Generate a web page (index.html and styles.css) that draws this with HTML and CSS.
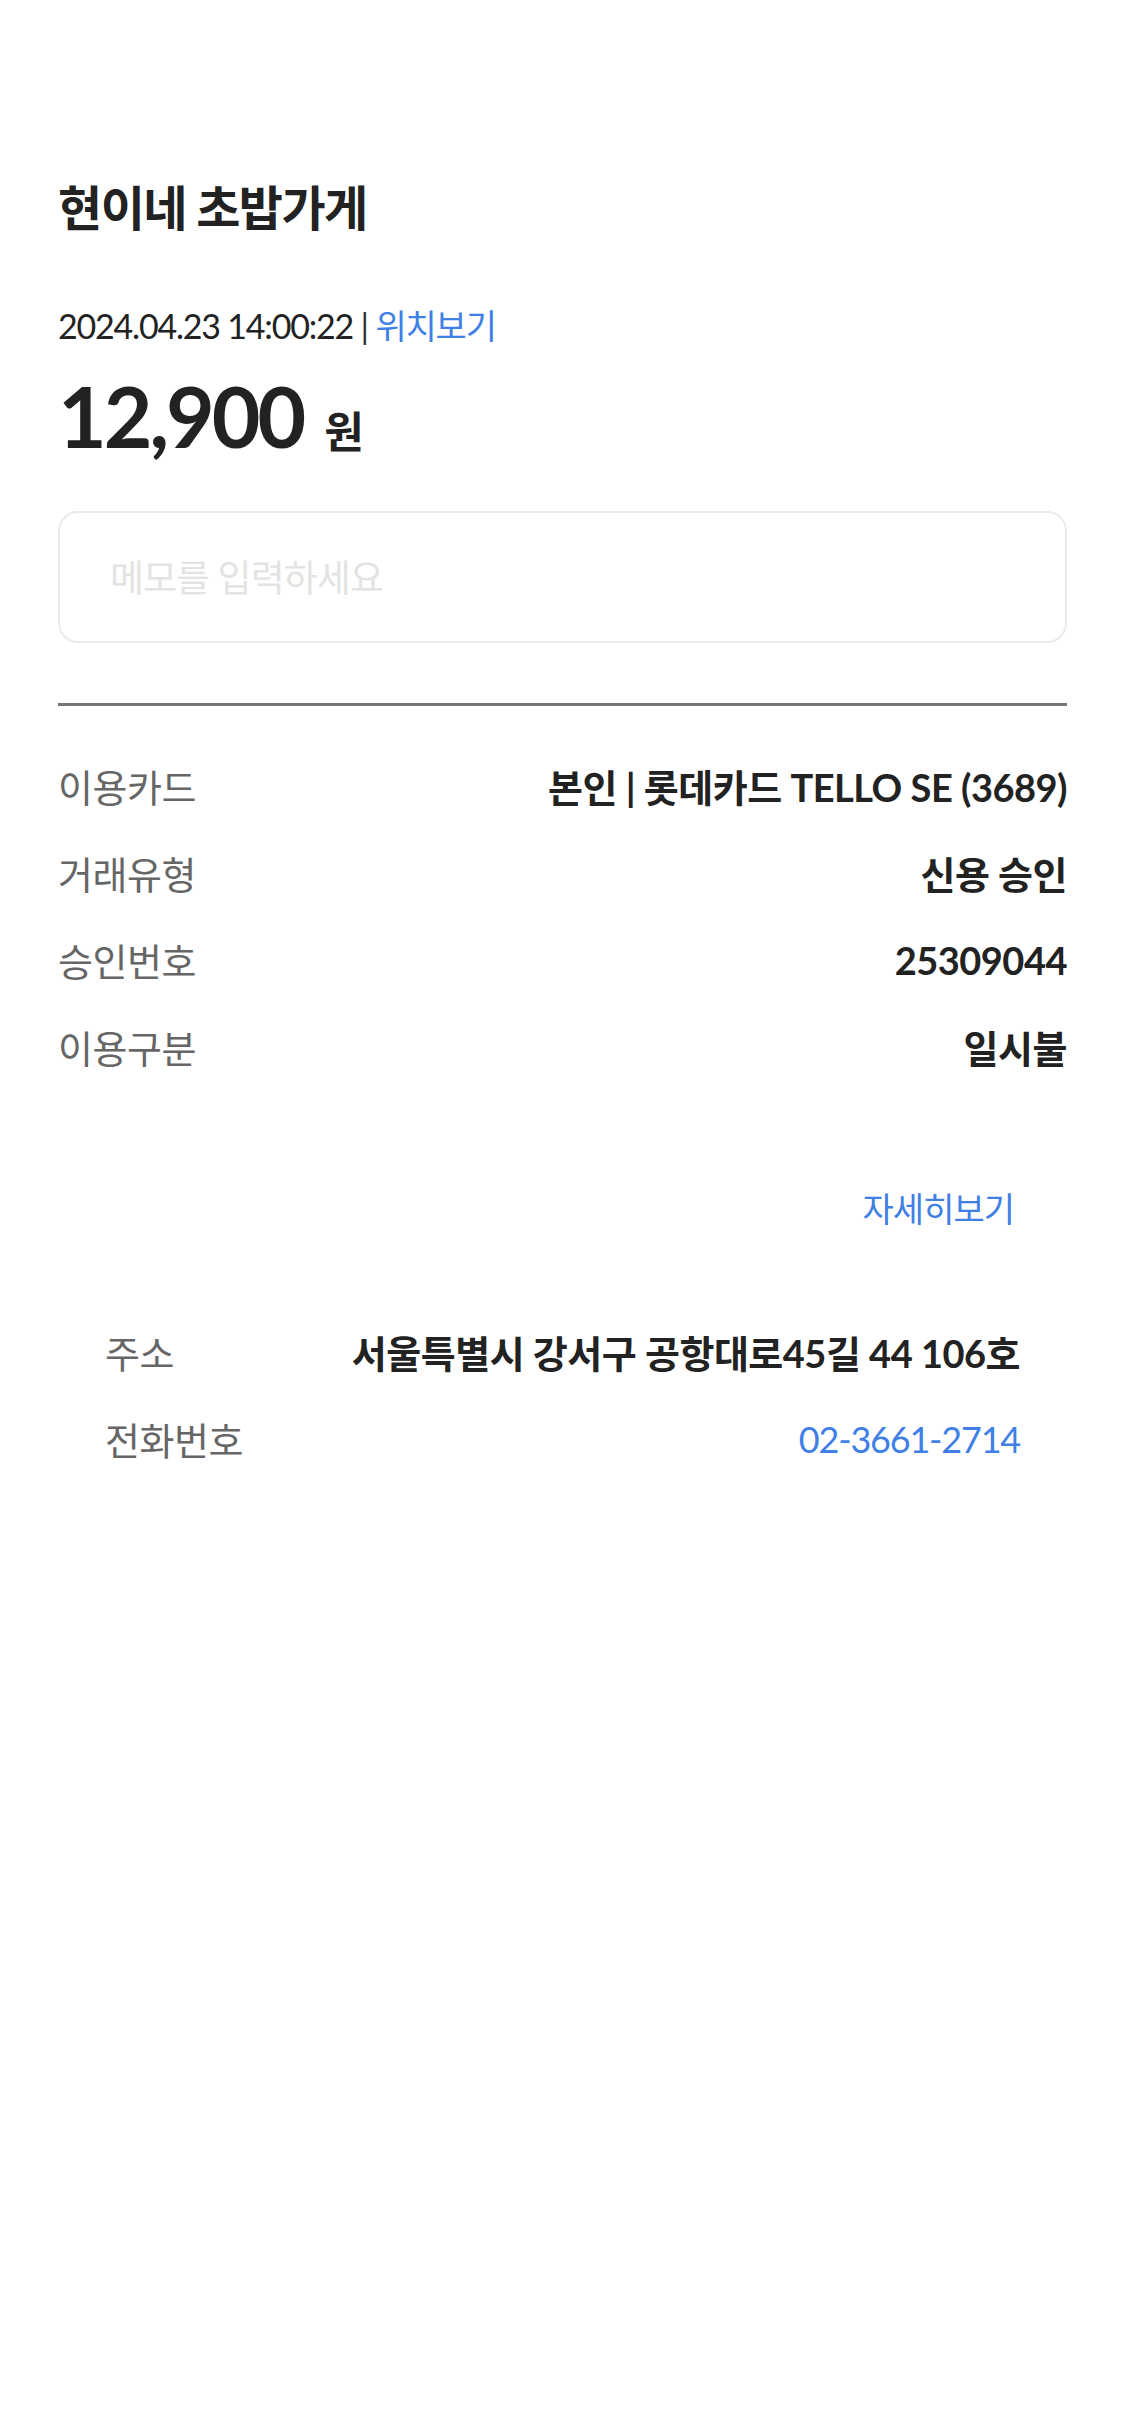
FILE: index.html
```html
<!DOCTYPE html>
<html lang="ko">
<head>
  <meta charset="UTF-8" />
  <title>결제 상세</title>
  <link rel="stylesheet" href="styles.css">
</head>
<body>
  <div class="container">
    <h1 class="store">현이네 초밥가게</h1>
    <div class="date">2024.04.23 14:00:22 <span class="bar">|</span> <a class="link">위치보기</a></div>
    <div class="amount"><span class="num">12,900</span><span class="won">원</span></div>

    <input class="memo" type="text" placeholder="메모를 입력하세요">

    <div class="divider"></div>

    <div class="info">
      <div class="row"><span class="label">이용카드</span><span class="value">본인 | 롯데카드 TELLO SE (3689)</span></div>
      <div class="row"><span class="label">거래유형</span><span class="value">신용 승인</span></div>
      <div class="row"><span class="label">승인번호</span><span class="value">25309044</span></div>
      <div class="row"><span class="label">이용구분</span><span class="value">일시불</span></div>
    </div>

    <div class="shop">
      <div class="more"><a class="link">자세히보기</a></div>
      <div class="row"><span class="label">주소</span><span class="value">서울특별시 강서구 공항대로45길 44 106호</span></div>
      <div class="row"><span class="label">전화번호</span><span class="value tel">02-3661-2714</span></div>
    </div>
  </div>
</body>
</html>
```

FILE: styles.css
```css
* {
  box-sizing: border-box;
}
body {
  margin: 0;
  background: #fff;
  color: #222;
  font-family: Lato, "Noto Sans CJK KR", sans-serif;
}
.container {
  padding: 178px 58px 0 58px;
}
.store {
  margin: 0;
  font-size: 48px;
  line-height: 60px;
  font-weight: 700;
  letter-spacing: -1.5px;
}
.date {
  margin-top: 64px;
  font-size: 34px;
  line-height: 48px;
  letter-spacing: -1.2px;
  color: #222;
}
.date .bar {
  color: #333;
}
.link {
  color: #3f7fe6;
  text-decoration: none;
}
.amount {
  margin-top: 16px;
  display: flex;
  align-items: baseline;
  height: 100px;
}
.amount .num {
  font-size: 84px;
  font-weight: 700;
  letter-spacing: -3px;
  line-height: 100px;
}
.amount .won {
  margin-left: 21px;
  font-size: 43px;
  font-weight: 700;
}
.memo {
  display: block;
  width: 100%;
  height: 132px;
  margin-top: 45px;
  padding: 0 50px;
  border: 2px solid #ebebeb;
  border-radius: 20px;
  font-family: Lato, "Noto Sans CJK KR", sans-serif;
  font-size: 37px;
  letter-spacing: -1px;
  color: #222;
  outline: none;
}
.memo::placeholder {
  color: #e3e3e3;
}
.divider {
  margin-top: 60px;
  height: 3px;
  background: #767676;
}
.info {
  margin-top: 36px;
}
.row {
  display: flex;
  justify-content: space-between;
  align-items: center;
  height: 87px;
  font-size: 38px;
  letter-spacing: -0.5px;
}
.label {
  color: #666;
}
.value {
  font-weight: 700;
  color: #222;
}
.value.tel {
  font-weight: 400;
  font-size: 36px;
  letter-spacing: -1.2px;
  color: #3f7fe6;
}
.shop {
  margin-top: 95px;
  padding: 0 47px;
}
.more {
  text-align: right;
  font-size: 34px;
  line-height: 48px;
  letter-spacing: -1px;
  margin-right: 6px;
  margin-bottom: 75px;
}
```
